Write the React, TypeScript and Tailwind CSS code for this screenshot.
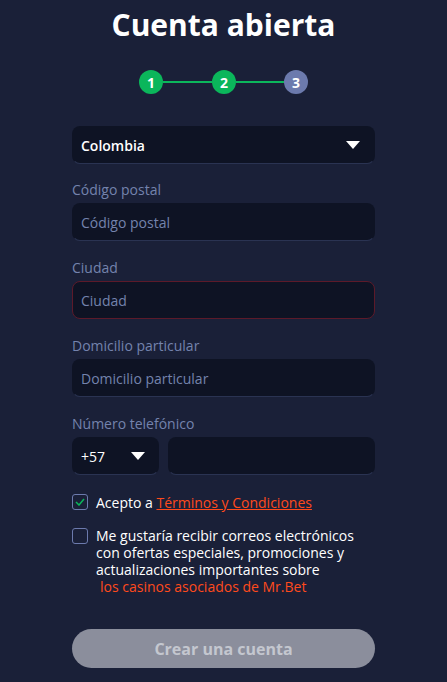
import React from 'react';

const Caret = () => (
  <svg width="14" height="8" viewBox="0 0 14 8" className="shrink-0">
    <path d="M0 0 L14 0 L7 8 Z" fill="#ffffff" />
  </svg>
);

const Field = ({ label, placeholder, error }: { label: string; placeholder: string; error?: boolean }) => (
  <div className="flex flex-col">
    <label className="text-[14px] leading-[20px] text-[#7483ad] mb-[3px]">{label}</label>
    <div
      className={`h-[38px] rounded-lg bg-[#0e1324] flex items-center px-[8px] border ${
        error ? 'border-[#5c1a2a]' : 'border-transparent border-b-[#2a3352]'
      }`}
    >
      <span className="text-[14px] text-[#7483ad]">{placeholder}</span>
    </div>
  </div>
);

export default function App() {
  return (
    <div
      className="min-h-[682px] w-full bg-[#1a2038] flex flex-col items-center"
      style={{ fontFamily: '"Open Sans", "Noto Sans", sans-serif' }}
    >
      <h1 className="text-[30px] leading-[36px] font-bold text-white mt-[7px]">Cuenta abierta</h1>

      {/* Steps */}
      <div className="flex items-center mt-[27px]">
        <div className="w-6 h-6 rounded-full bg-[#0bb65b] text-white text-[14px] font-bold flex items-center justify-center">1</div>
        <div className="w-[49px] h-[2px] bg-[#0bb65b]" />
        <div className="w-6 h-6 rounded-full bg-[#0bb65b] text-white text-[14px] font-bold flex items-center justify-center">2</div>
        <div className="w-[48px] h-[2px] bg-[#0bb65b]" />
        <div className="w-6 h-6 rounded-full bg-[#6c7aad] text-white text-[14px] font-bold flex items-center justify-center">3</div>
      </div>

      <div className="w-[303px] flex flex-col mt-[32px]">
        {/* Country select */}
        <div className="h-[38px] rounded-lg bg-[#0e1324] border border-transparent border-b-[#2a3352] flex items-center justify-between pl-[8px] pr-[14px]">
          <span className="text-[14px] font-semibold text-white">Colombia</span>
          <Caret />
        </div>

        <div className="flex flex-col gap-[17px] mt-[16px]">
          <Field label="Código postal" placeholder="Código postal" />
          <Field label="Ciudad" placeholder="Ciudad" error />
          <Field label="Domicilio particular" placeholder="Domicilio particular" />

          <div className="flex flex-col">
            <label className="text-[14px] leading-[20px] text-[#7483ad] mb-[3px]">Número telefónico</label>
            <div className="flex gap-[9px]">
              <div className="w-[87px] h-[38px] rounded-lg bg-[#0e1324] border border-transparent border-b-[#2a3352] flex items-center justify-between pl-[8px] pr-[13px]">
                <span className="text-[14px] text-white">+57</span>
                <Caret />
              </div>
              <div className="flex-1 h-[38px] rounded-lg bg-[#0e1324] border border-transparent border-b-[#2a3352]" />
            </div>
          </div>
        </div>

        {/* Checkboxes */}
        <div className="flex items-center gap-[8px] mt-[17px] h-[20px]">
          <div className="w-4 h-4 rounded-[3px] border border-[#6c7aad] flex items-center justify-center">
            <svg width="10" height="8" viewBox="0 0 10 8">
              <path d="M1 4 L4 7 L9 1" fill="none" stroke="#0bb65b" strokeWidth="1.5" />
            </svg>
          </div>
          <span className="text-[14px] text-white font-medium">
            Acepto a <span className="text-[#ff4a1c] underline">Términos y Condiciones</span>
          </span>
        </div>

        <div className="flex items-start gap-[8px] mt-[15px]">
          <div className="w-4 h-4 mt-[1px] rounded-[3px] border border-[#6c7aad] shrink-0" />
          <div className="text-[14px] leading-[17px] text-white font-medium">
            <p>Me gustaría recibir correos electrónicos con ofertas especiales, promociones y actualizaciones importantes sobre</p>
            <p className="text-[#ff4a1c] pl-1">los casinos asociados de Mr.Bet</p>
          </div>
        </div>

        <button className="mt-[34px] h-[39px] rounded-full bg-[#8b8e9c] text-[#c4c7cf] text-[16px] font-bold">
          Crear una cuenta
        </button>
      </div>
    </div>
  );
}
